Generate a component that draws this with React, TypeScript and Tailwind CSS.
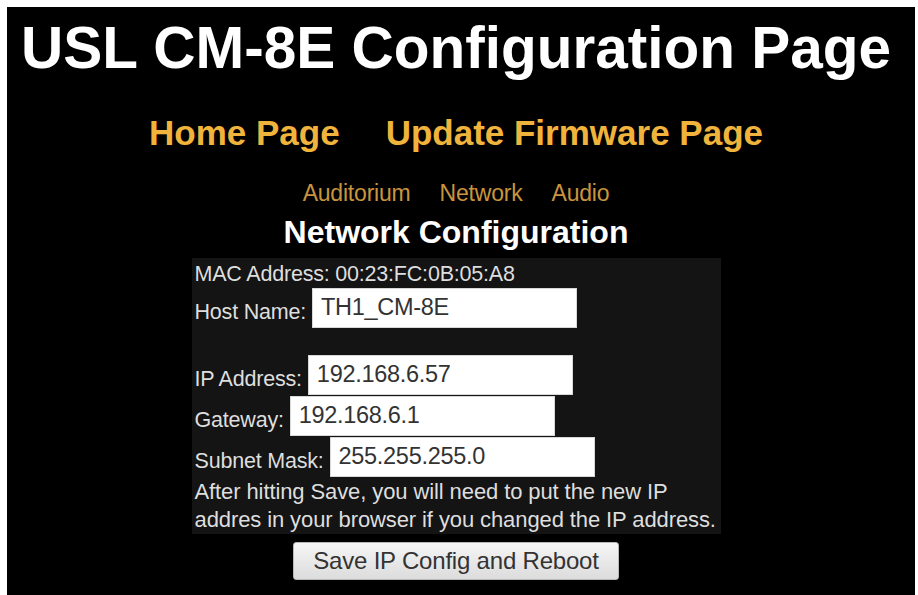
import React from "react";

const F = { fontFamily: '"Liberation Sans", Arial, sans-serif' };

function Field({ label, value }: { label: string; value: string }) {
  return (
    <div className="flex items-center h-[40px]">
      <span className="mt-[8px] text-[21.5px] leading-[20px] text-[#dedede] tracking-[-0.2px]">{label}</span>
      <div className="ml-[6px] w-[265px] h-[40px] bg-white border border-[#d8d8d8] flex items-center pl-[8px] text-[23.5px] text-[#333] tracking-[-0.3px]">
        {value}
      </div>
    </div>
  );
}

export default function App() {
  return (
    <div className="w-[918px] h-[595px] bg-white pl-[7px] pt-[7px] pr-[3px] overflow-hidden" style={F}>
      <div className="h-[588px] bg-black pr-[10px] flex flex-col items-center">
        <h1 className="mt-[12px] text-[58.5px] leading-[58px] font-bold text-white whitespace-nowrap">
          USL CM-8E Configuration Page
        </h1>
        <div className="mt-[39px] flex gap-[46px] text-[35px] leading-[34px] font-bold text-[#f0b43c] whitespace-nowrap">
          <span>Home Page</span>
          <span>Update Firmware Page</span>
        </div>
        <div className="mt-[32px] flex gap-[29px] text-[23px] leading-[23px] text-[#c8953e] whitespace-nowrap tracking-[-0.2px]">
          <span>Auditorium</span>
          <span>Network</span>
          <span>Audio</span>
        </div>
        <h2 className="mt-[12px] text-[32px] leading-[31px] font-bold text-white whitespace-nowrap">
          Network Configuration
        </h2>
        <div className="mt-[10px] w-[529px] h-[276px] bg-[#141414] pl-[3px] pt-[3px] flex flex-col">
          <div className="h-[27px] flex items-center text-[21.5px] leading-[20px] text-[#dedede] tracking-[-0.2px] whitespace-nowrap">
            MAC Address: 00:23:FC:0B:05:A8
          </div>
          <Field label="Host Name:" value="TH1_CM-8E" />
          <div className="h-[28px]" />
          <Field label="IP Address:" value="192.168.6.57" />
          <div className="h-[1px]" />
          <Field label="Gateway:" value="192.168.6.1" />
          <div className="h-[1px]" />
          <Field label="Subnet Mask:" value="255.255.255.0" />
          <div className="mt-[1px] text-[22px] leading-[28px] text-[#dedede] tracking-[-0.1px] whitespace-nowrap">
            After hitting Save, you will need to put the new IP
            <br />
            addres in your browser if you changed the IP address.
          </div>
        </div>
        <button
          className="mt-[8px] w-[326px] h-[38px] rounded-[3px] border border-[#b8b8b8] bg-gradient-to-b from-[#f6f6f6] to-[#dcdcdc] text-[24px] leading-[24px] text-[#333] tracking-[-0.2px]"
          style={F}
        >
          Save IP Config and Reboot
        </button>
      </div>
    </div>
  );
}
